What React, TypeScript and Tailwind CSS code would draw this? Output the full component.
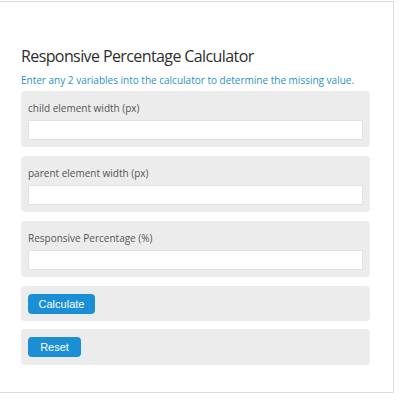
import React from "react";

const fields = [
  "child element width (px)",
  "parent element width (px)",
  "Responsive Percentage (%)",
];

const App = () => {
  return (
    <div className="w-[400px] h-[400px] bg-white overflow-hidden">
      <div className="mt-[1px] w-[394px] h-[392px] border-t border-r border-b border-[#dcdcdc] pl-[21px] pr-[23px] pt-[43px]">
        <h1
          className="text-[16px] leading-[22px] text-[#2e2e2e] font-medium tracking-[-0.6px]"
          style={{ fontFamily: '"Open Sans", sans-serif' }}
        >
          Responsive Percentage Calculator
        </h1>
        <p
          className="mt-[6px] text-[10px] leading-[14px] text-[#2b8fc6] whitespace-nowrap"
          style={{ fontFamily: '"Open Sans", sans-serif' }}
        >
          Enter any 2 variables into the calculator to determine the missing value.
        </p>

        <div className="mt-[4px] flex flex-col">
          {fields.map((label) => (
            <div
              key={label}
              className="mb-[9px] bg-[#ececec] rounded-[4px] px-[7px] pt-[10px] pb-[7px]"
            >
              <label
                className="block text-[10px] leading-[14px] text-[#555]"
                style={{ fontFamily: '"Open Sans", sans-serif' }}
              >
                {label}
              </label>
              <input
                type="text"
                className="mt-[5px] block w-full h-[20px] bg-white border border-[#e2e2e2] outline-none"
              />
            </div>
          ))}

          <div className="mb-[8px] bg-[#ececec] rounded-[4px] px-[7px] pt-[8px] pb-[7px]">
            <button
              className="block h-[20px] w-[67px] rounded-[4px] bg-[#1a8fd6] text-white text-[11px] leading-[20px]"
              style={{ fontFamily: '"Liberation Sans", Arial, sans-serif' }}
            >
              Calculate
            </button>
          </div>

          <div className="bg-[#ececec] rounded-[4px] px-[7px] py-[8px]">
            <button
              className="block h-[20px] w-[53px] rounded-[4px] bg-[#1a8fd6] text-white text-[11px] leading-[20px]"
              style={{ fontFamily: '"Liberation Sans", Arial, sans-serif' }}
            >
              Reset
            </button>
          </div>
        </div>
      </div>
    </div>
  );
};

export default App;
